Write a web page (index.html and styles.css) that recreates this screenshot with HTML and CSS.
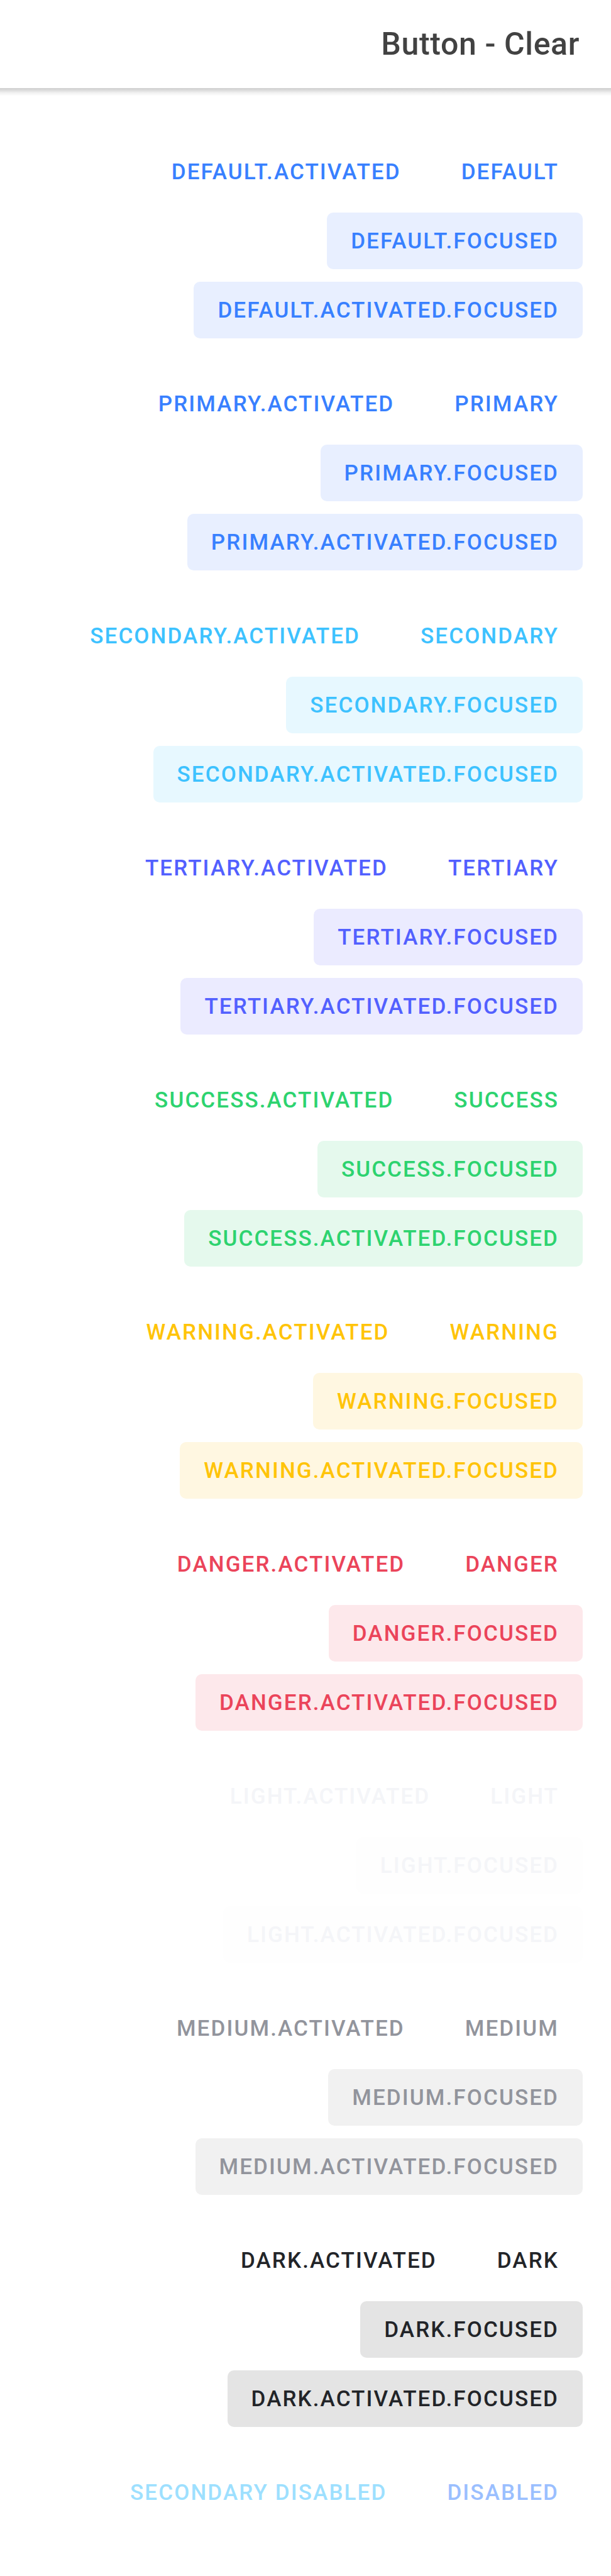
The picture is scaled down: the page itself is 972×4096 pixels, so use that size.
FILE: index.html
```html
<!DOCTYPE html>
<html lang="en" dir="rtl">
<head>
<meta charset="utf-8">
<meta name="viewport" content="width=device-width, initial-scale=1">
<title>Button - Clear</title>
<link rel="stylesheet" href="styles.css">
</head>
<body>
<header class="header"><h1 class="title">Button - Clear</h1></header>
<main class="content">
  <div class="group primary">
    <button type="button" class="button">Default</button>
    <button type="button" class="button">Default.activated</button>
    <button type="button" class="button focused">Default.focused</button>
    <button type="button" class="button focused">Default.activated.focused</button>
  </div>
  <div class="group primary">
    <button type="button" class="button">Primary</button>
    <button type="button" class="button">Primary.activated</button>
    <button type="button" class="button focused">Primary.focused</button>
    <button type="button" class="button focused">Primary.activated.focused</button>
  </div>
  <div class="group secondary">
    <button type="button" class="button">Secondary</button>
    <button type="button" class="button">Secondary.activated</button>
    <button type="button" class="button focused">Secondary.focused</button>
    <button type="button" class="button focused">Secondary.activated.focused</button>
  </div>
  <div class="group tertiary">
    <button type="button" class="button">Tertiary</button>
    <button type="button" class="button">Tertiary.activated</button>
    <button type="button" class="button focused">Tertiary.focused</button>
    <button type="button" class="button focused">Tertiary.activated.focused</button>
  </div>
  <div class="group success">
    <button type="button" class="button">Success</button>
    <button type="button" class="button">Success.activated</button>
    <button type="button" class="button focused">Success.focused</button>
    <button type="button" class="button focused">Success.activated.focused</button>
  </div>
  <div class="group warning">
    <button type="button" class="button">Warning</button>
    <button type="button" class="button">Warning.activated</button>
    <button type="button" class="button focused">Warning.focused</button>
    <button type="button" class="button focused">Warning.activated.focused</button>
  </div>
  <div class="group danger">
    <button type="button" class="button">Danger</button>
    <button type="button" class="button">Danger.activated</button>
    <button type="button" class="button focused">Danger.focused</button>
    <button type="button" class="button focused">Danger.activated.focused</button>
  </div>
  <div class="group light">
    <button type="button" class="button">Light</button>
    <button type="button" class="button">Light.activated</button>
    <button type="button" class="button focused">Light.focused</button>
    <button type="button" class="button focused">Light.activated.focused</button>
  </div>
  <div class="group medium">
    <button type="button" class="button">Medium</button>
    <button type="button" class="button">Medium.activated</button>
    <button type="button" class="button focused">Medium.focused</button>
    <button type="button" class="button focused">Medium.activated.focused</button>
  </div>
  <div class="group dark">
    <button type="button" class="button">Dark</button>
    <button type="button" class="button">Dark.activated</button>
    <button type="button" class="button focused">Dark.focused</button>
    <button type="button" class="button focused">Dark.activated.focused</button>
  </div>
  <div class="group">
    <button type="button" class="button primary" disabled>Disabled</button>
    <button type="button" class="button secondary" disabled>Secondary Disabled</button>
  </div>
</main>
</body>
</html>
```
FILE: styles.css
```css
* {
  box-sizing: border-box;
}

body {
  margin: 0;
  background: #fff;
  font-family: Roboto, "Liberation Sans", sans-serif;
}

.header {
  position: relative;
  display: flex;
  align-items: center;
  height: 140px;
  padding: 0 50px;
  background: #fff;
}

/* soft shadow cast on the content below the toolbar */
.header::after {
  content: "";
  position: absolute;
  top: 100%;
  left: 0;
  right: 0;
  height: 12px;
  background: linear-gradient(rgba(0, 0, 0, 0.19), rgba(0, 0, 0, 0.15) 25%, rgba(0, 0, 0, 0.05) 65%, rgba(0, 0, 0, 0.01));
}

.title {
  margin: 0;
  color: #424242;
  font-size: 50px;
  font-weight: 500;
  line-height: 60px;
  letter-spacing: 0.0125em;
}

.content {
  display: flex;
  flex-direction: column;
  gap: 39px;
  padding: 78px 40px 70px;
}

.group {
  display: flex;
  flex-wrap: wrap;
  column-gap: 10px;
}

.button {
  height: 90px;
  margin: 10px 5px;
  padding: 2px 38px 0;
  border: 0;
  border-radius: 10px;
  background: transparent;
  color: var(--base);
  font-family: inherit;
  font-size: 35px;
  font-weight: 500;
  line-height: 42px;
  letter-spacing: 0.06em;
  text-transform: uppercase;
  white-space: nowrap;
}

.focused {
  background: var(--tint);
}

.button:disabled {
  opacity: 0.5;
}

.primary {
  --base: #3880ff;
  --tint: #e8efff;
}

.secondary {
  --base: #3dc2ff;
  --tint: #e7f8ff;
}

.tertiary {
  --base: #5260ff;
  --tint: #ebebff;
}

.success {
  --base: #2dd36f;
  --tint: #e5f9ed;
}

.warning {
  --base: #ffc409;
  --tint: #fff7e1;
}

.danger {
  --base: #eb445a;
  --tint: #fde8eb;
}

.light {
  --base: #f4f5f8;
  --tint: #fefefe;
}

.medium {
  --base: #92949c;
  --tint: #f1f1f1;
}

.dark {
  --base: #222428;
  --tint: #e4e4e4;
}
```
